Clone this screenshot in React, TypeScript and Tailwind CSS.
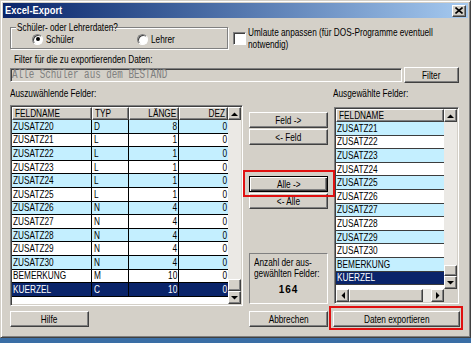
import React from 'react';

const raised =
  'bg-[#d4d0c8] border border-t-white border-l-white border-r-[#404040] border-b-[#404040] shadow-[inset_-1px_-1px_#808080]';
const sunken =
  'border border-t-[#808080] border-l-[#808080] border-r-white border-b-white shadow-[inset_1px_1px_#404040,inset_-1px_-1px_#d4d0c8] p-px';

// the dialog font is a narrow sans; squeeze 11px Arial-metric text horizontally
const T = ({
  children,
  o = 'left',
  className = '',
}: {
  children: React.ReactNode;
  o?: 'left' | 'right' | 'center';
  className?: string;
}) => (
  <span
    className={`inline-block whitespace-nowrap scale-x-[0.75] ${
      o === 'left' ? 'origin-left' : o === 'right' ? 'origin-right' : 'origin-center'
    } ${className}`}
  >
    {children}
  </span>
);

const left = [
  ['ZUSATZ20', 'D', '8', '0'],
  ['ZUSATZ21', 'L', '1', '0'],
  ['ZUSATZ22', 'L', '1', '0'],
  ['ZUSATZ23', 'L', '1', '0'],
  ['ZUSATZ24', 'L', '1', '0'],
  ['ZUSATZ25', 'L', '1', '0'],
  ['ZUSATZ26', 'N', '4', '0'],
  ['ZUSATZ27', 'N', '4', '0'],
  ['ZUSATZ28', 'N', '4', '0'],
  ['ZUSATZ29', 'N', '4', '0'],
  ['ZUSATZ30', 'N', '4', '0'],
  ['BEMERKUNG', 'M', '10', '0'],
  ['KUERZEL', 'C', '10', '0'],
];

const right = [
  'ZUSATZ21', 'ZUSATZ22', 'ZUSATZ23', 'ZUSATZ24', 'ZUSATZ25', 'ZUSATZ26',
  'ZUSATZ27', 'ZUSATZ28', 'ZUSATZ29', 'ZUSATZ30', 'BEMERKUNG', 'KUERZEL',
];

const Arrow = ({ dir }: { dir: 'up' | 'down' | 'left' | 'right' }) => {
  if (dir === 'up' || dir === 'down') {
    return (
      <svg width="7" height="4" viewBox="0 0 7 4">
        <polygon points={dir === 'up' ? '0,4 7,4 3.5,0.5' : '0,0 7,0 3.5,3.5'} fill="#000" />
      </svg>
    );
  }
  return (
    <svg width="4" height="7" viewBox="0 0 4 7">
      <polygon points={dir === 'left' ? '4,0 4,7 0.5,3.5' : '0,0 0,7 3.5,3.5'} fill="#000" />
    </svg>
  );
};

const ScrollBtn = ({ dir }: { dir: 'up' | 'down' | 'left' | 'right' }) => (
  <div className={`${raised} w-[13px] h-[13px] shrink-0 flex items-center justify-center`}>
    <Arrow dir={dir} />
  </div>
);

const Btn = ({ label, className = '' }: { label: string; className?: string }) => (
  <div className={`${raised} h-[16px] shrink-0 flex items-center justify-center leading-none ${className}`}>
    <T o="center">{label}</T>
  </div>
);

const rowBg = (i: number, selIdx: number) => {
  if (i === selIdx) return 'bg-[#0a246a] text-white';
  return i % 2 === 0 ? 'bg-[#c4efff] text-black' : 'bg-white text-black';
};

const headCell =
  'bg-[#d4d0c8] border border-t-white border-l-white border-r-[#404040] border-b-[#404040] shadow-[inset_-1px_-1px_#808080] flex items-center px-[2px] leading-none';

export default function App() {
  return (
    <div className="relative w-[471px] h-[343px] bg-[#3a6ea5] overflow-hidden font-['Liberation_Sans',Arial,sans-serif] text-[11px] text-black">
      <div className="h-[338px] w-[471px] bg-[#d4d0c8] border border-t-[#d4d0c8] border-l-[#d4d0c8] border-r-[#404040] border-b-[#404040] shadow-[inset_1px_1px_white,inset_-1px_-1px_#808080] p-[2px] flex flex-col">
        {/* title bar */}
        <div className="h-[15px] shrink-0 bg-linear-to-r from-[#0a246a] to-[#a6caf0] flex items-center justify-between pl-[2px] pr-[2px]">
          <span className="inline-block text-white font-bold text-[11px] leading-none scale-x-[0.85] origin-left">
            Excel-Export
          </span>
          <div className={`${raised} w-[14px] h-[12px] flex items-center justify-center`}>
            <svg width="8" height="7" viewBox="0 0 8 7">
              <path d="M0.5 0.5 L7.5 6.5 M7.5 0.5 L0.5 6.5" stroke="#000" strokeWidth="1.6" />
            </svg>
          </div>
        </div>

        {/* body */}
        <div className="pl-[7px] flex flex-col">
          {/* row 1 */}
          <div className="h-[31px] flex items-start">
            <div className="relative shrink-0 mt-[9px] w-[218px] h-[22px] border border-[#808080] shadow-[inset_1px_1px_white,1px_1px_white]">
              <span className="absolute left-[5px] top-[-7px] w-[94px] bg-[#d4d0c8] leading-[12px] pl-[1px]">
                <T>Schüler- oder Lehrerdaten?</T>
              </span>
              <div className="flex items-center pl-[21px] pt-[5px]">
                <div className="w-[105px] flex items-center">
                  <div className="w-[11px] h-[11px] rounded-full bg-white border border-t-[#808080] border-l-[#808080] border-r-white border-b-white shadow-[inset_1px_1px_#404040] flex items-center justify-center">
                    <div className="w-[4px] h-[4px] rounded-full bg-black" />
                  </div>
                  <span className="ml-[3px] leading-[12px]">
                    <T>Schüler</T>
                  </span>
                </div>
                <div className="flex items-center">
                  <div className="w-[11px] h-[11px] rounded-full bg-white border border-t-[#808080] border-l-[#808080] border-r-white border-b-white shadow-[inset_1px_1px_#404040]" />
                  <span className="ml-[3px] leading-[12px]">
                    <T>Lehrer</T>
                  </span>
                </div>
              </div>
            </div>
            <div className="ml-[5px] min-w-0 flex items-start">
              <div className="shrink-0 mt-[14px] w-[13px] h-[13px] bg-white border border-t-[#808080] border-l-[#808080] border-r-white border-b-white shadow-[inset_1px_1px_#404040]" />
              <div className="ml-[1px] mt-[8px] pl-[1px] flex flex-col leading-[12px]">
                <T>Umlaute anpassen (für DOS-Programme eventuell</T>
                <T>notwendig)</T>
              </div>
            </div>
          </div>

          {/* filter */}
          <div className="mt-[4px] pl-[4px] h-[12px] leading-[12px]">
            <T>Filter für die zu exportierenden Daten:</T>
          </div>
          <div className="mt-[2px] h-[16px] flex items-center">
            <div className={`${sunken} shrink-0 w-[392px] h-[14px] flex items-center pl-[1px] overflow-hidden`}>
              <span className="inline-block whitespace-nowrap scale-x-[0.77] origin-left font-['Liberation_Mono',monospace] text-[12px] text-[#808080] leading-none">
                Alle Schüler aus dem BESTAND
              </span>
            </div>
            <Btn label="Filter" className="ml-[2px] w-[55px]" />
          </div>

          {/* labels */}
          <div className="mt-[4px] h-[12px] flex leading-[12px]">
            <div className="w-[323px] shrink-0">
              <T>Auszuwählende Felder:</T>
            </div>
            <div>
              <T>Ausgewählte Felder:</T>
            </div>
          </div>

          {/* main */}
          <div className="mt-[6px] h-[201px] flex items-start">
            {/* left table */}
            <div className={`${sunken} shrink-0 w-[233px] h-[201px] flex`}>
              <div className="flex-1 flex flex-col bg-white">
                <div className="flex h-[13px] shrink-0">
                  <div className={`${headCell} w-[80px] justify-start`}><T>FELDNAME</T></div>
                  <div className={`${headCell} w-[37px] justify-start`}><T>TYP</T></div>
                  <div className={`${headCell} w-[50px] justify-end`}><T o="right">LÄNGE</T></div>
                  <div className={`${headCell} w-[49px] justify-end`}><T o="right">DEZ</T></div>
                </div>
                {left.map((r, i) => (
                  <div key={r[0]} className={`flex h-[13.6px] shrink-0 ${rowBg(i, 12)}`}>
                    <div className="w-[80px] border-r border-b border-black flex items-center px-[1px] leading-none">
                      <T>{r[0]}</T>
                    </div>
                    <div className="w-[37px] border-r border-b border-black flex items-center px-[2px] leading-none">
                      <T>{r[1]}</T>
                    </div>
                    <div className="w-[50px] border-r border-b border-black flex items-center justify-end px-[1px] leading-none">
                      <T o="right">{r[2]}</T>
                    </div>
                    <div className="w-[49px] border-b border-black flex items-center justify-end px-[1px] leading-none">
                      <T o="right">{r[3]}</T>
                    </div>
                  </div>
                ))}
                <div className="flex-1 bg-white" />
              </div>
              <div className="w-[13px] flex flex-col">
                <ScrollBtn dir="up" />
                <div className="flex-1 bg-[#ebe9e5]" />
                <div className={`${raised} w-[13px] h-[12px]`} />
                <ScrollBtn dir="down" />
              </div>
            </div>

            {/* middle */}
            <div className="ml-[6px] w-[79px] shrink-0 flex flex-col">
              <Btn label="Feld ->" className="mt-[7px]" />
              <Btn label="<- Feld" className="mt-[1px]" />
              <div className="mt-[31px] h-[16px] bg-[#d4d0c8] border border-black shadow-[inset_1px_1px_white,inset_-1px_-1px_#404040,inset_-2px_-2px_#808080] flex items-center justify-center leading-none">
                <T o="center">Alle -&gt;</T>
              </div>
              <Btn label="<- Alle" className="mt-[1px]" />
              <div className="mt-[44px] h-[51px] border border-t-[#808080] border-l-[#808080] border-r-white border-b-white pt-[3px] pl-[4px] flex flex-col">
                <div className="leading-[11px]">
                  <T>Anzahl der aus-</T>
                </div>
                <div className="leading-[11px]">
                  <T>gewählten Felder:</T>
                </div>
                <div className="mt-[5px] text-center pr-[4px] font-bold text-[10px] tracking-[1px] leading-[11px]">
                  164
                </div>
              </div>
            </div>

            {/* right list */}
            <div className={`${sunken} shrink-0 ml-[6px] mt-[2px] w-[125px] h-[197px] flex flex-col`}>
              <div className="flex-1 flex min-h-0">
                <div className="w-[108px] flex flex-col bg-white">
                  <div className={`${headCell} h-[13px] shrink-0`}>
                    <T>FELDNAME</T>
                  </div>
                  {right.map((r, i) => (
                    <div
                      key={r}
                      className={`h-[13.6px] shrink-0 border-b border-[#3c3c3c] flex items-center px-[1px] leading-none ${rowBg(i, 11)}`}
                    >
                      <T>{r}</T>
                    </div>
                  ))}
                  <div className="flex-1 bg-white" />
                </div>
                <div className="w-[13px] flex flex-col">
                  <ScrollBtn dir="up" />
                  <div className="flex-1 bg-[#ebe9e5]" />
                  <div className={`${raised} w-[13px] h-[11px]`} />
                  <ScrollBtn dir="down" />
                </div>
              </div>
              <div className="h-[13px] shrink-0 flex">
                <div className="w-[108px] flex">
                  <ScrollBtn dir="left" />
                  <div className={`${raised} w-[74px] h-[13px]`} />
                  <div className="flex-1 bg-[#ebe9e5]" />
                  <ScrollBtn dir="right" />
                </div>
                <div className="w-[13px] bg-[#d4d0c8]" />
              </div>
            </div>
          </div>

          {/* bottom buttons */}
          <div className="mt-[5px] flex">
            <Btn label="Hilfe" className="w-[79px]" />
            <Btn label="Abbrechen" className="ml-[160px] w-[79px]" />
            <Btn label="Daten exportieren" className="ml-[5px] w-[127px]" />
          </div>
        </div>
      </div>

      {/* red highlight marks */}
      <div className="absolute left-[243px] top-[170px] w-[92px] h-[27px] border-2 border-[#e01010]" />
      <div className="absolute left-[329px] top-[306px] w-[134px] h-[24px] border-2 border-[#e01010]" />
    </div>
  );
}
